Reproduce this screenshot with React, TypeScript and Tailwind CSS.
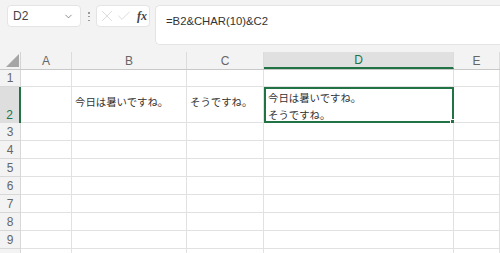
import { ChevronDown, X, Check } from "lucide-react";

const COLS = [
  { key: "A", w: "w-[51px]" },
  { key: "B", w: "w-[115px]" },
  { key: "C", w: "w-[77px]" },
  { key: "D", w: "w-[190px]" },
  { key: "E", w: "flex-1" },
];

const ROWS = [
  { n: 1, h: "h-[17px]" },
  { n: 2, h: "h-[36px]" },
  { n: 3, h: "h-[18px]" },
  { n: 4, h: "h-[18px]" },
  { n: 5, h: "h-[18px]" },
  { n: 6, h: "h-[18px]" },
  { n: 7, h: "h-[18px]" },
  { n: 8, h: "h-[18px]" },
  { n: 9, h: "h-[18px]" },
  { n: 10, h: "h-[18px]" },
];

const CJK = "font-['Noto_Sans_CJK_JP',sans-serif]";

function CellContent({ col, row }: { col: string; row: number }) {
  if (row !== 2) return null;
  if (col === "B")
    return <span className={`pl-[3px] pt-[7px] text-[10.4px] text-[#333] ${CJK}`}>今日は暑いですね。</span>;
  if (col === "C")
    return <span className={`pl-[3px] pt-[7px] text-[10.4px] text-[#333] ${CJK}`}>そうですね。</span>;
  if (col === "D")
    return (
      <span className={`pl-[2px] text-[10.4px] leading-[17px] text-[#333] ${CJK}`}>
        今日は暑いですね。
        <br />
        そうですね。
      </span>
    );
  return null;
}

export default function App() {
  return (
    <div className="w-[500px] h-[253px] overflow-hidden bg-[#f3f3f3] font-['Liberation_Sans',sans-serif]">
      {/* toolbar */}
      <div className="flex h-[45px] pl-[7px] pt-[5px]">
        <div className="flex h-[22px] w-[74px] items-center justify-between rounded-[4px] border border-[#e4e4e4] bg-white pl-[5px] pr-[6px]">
          <span className="text-[12px] text-[#444]">D2</span>
          <ChevronDown size={11} strokeWidth={1.6} className="text-[#666]" />
        </div>
        <div className="ml-[7px] mt-[7px] flex h-[9px] w-[2px] flex-col justify-between">
          <div className="h-[1.5px] w-[1.5px] bg-[#999]" />
          <div className="h-[1.5px] w-[1.5px] bg-[#999]" />
          <div className="h-[1.5px] w-[1.5px] bg-[#999]" />
        </div>
        <div className="ml-[6px] flex h-[22px] w-[54px] items-center rounded-[4px] border border-[#e4e4e4] bg-white pl-[1px]">
          <X size={18} strokeWidth={0.8} className="text-[#c4c4c4]" />
          <Check size={16} strokeWidth={0.9} className="text-[#c4c4c4]" />
          <span className="ml-[5px] font-['Liberation_Serif',serif] text-[12px] font-bold italic text-[#444]">fx</span>
        </div>
        <div className="ml-[5px] h-[40px] flex-1 rounded-l-[5px] border border-r-0 border-[#e4e4e4] bg-white pl-[10px] pt-[2px]">
          <span className="text-[11.3px] text-[#333]">=B2&amp;CHAR(10)&amp;C2</span>
        </div>
      </div>
      <div className="h-[7px]" />
      {/* column header */}
      <div className="flex h-[18px] border-b border-[#c8c8c8]">
        <div className="relative w-[21px] border-r border-[#d4d4d4]">
          <div className="absolute bottom-[2px] right-[1px] h-0 w-0 border-b-[13px] border-l-[13px] border-b-[#a6a6a6] border-l-transparent" />
        </div>
        {COLS.map((c) => (
          <div
            key={c.key}
            className={`${c.w} flex items-center justify-center border-r border-[#dcdcdc] text-[12px] ${
              c.key === "D" ? "border-b-2 border-b-[#217346] bg-[#e0e0e0] text-[#217346]" : "text-[#666]"
            }`}
          >
            {c.key}
          </div>
        ))}
      </div>
      {/* rows */}
      {ROWS.map((r) => (
        <div key={r.n} className={`flex ${r.h}`}>
          <div
            className={`flex w-[21px] items-end justify-center pb-[1px] text-[12px] leading-[14px] ${
              r.n === 2
                ? "border-r-2 border-[#217346] bg-[#dedede] text-[#217346]"
                : "border-r border-b border-[#d8d8d8] text-[#666]"
            }`}
          >
            {r.n < 10 ? r.n : null}
          </div>
          {COLS.map((c) => {
            const sel = r.n === 2 && c.key === "D";
            return (
              <div
                key={c.key}
                className={`${c.w} relative flex bg-white ${
                  sel ? "border-2 border-[#217346]" : "border-r border-b border-[#e1e1e1]"
                }`}
              >
                <CellContent col={c.key} row={r.n} />
                {sel && (
                  <div className="absolute -bottom-[3px] -right-[3px] h-[5px] w-[5px] border border-white bg-[#217346]" />
                )}
              </div>
            );
          })}
        </div>
      ))}
    </div>
  );
}
